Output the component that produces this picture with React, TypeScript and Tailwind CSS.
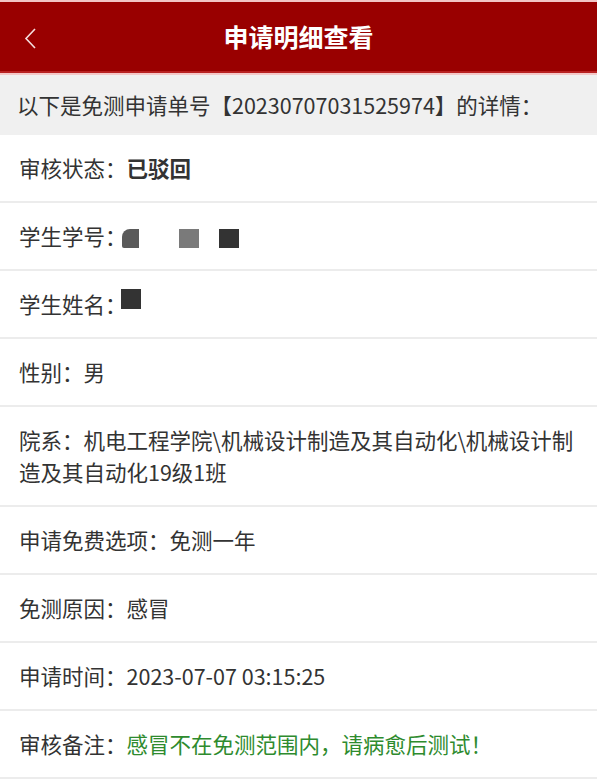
const font = { fontFamily: '"Noto Sans CJK SC", "Noto Sans", sans-serif' };

function Row({ label, children, tall }: { label: string; children?: React.ReactNode; tall?: boolean }) {
  return (
    <div
      className={
        "flex items-center border-b-2 border-[#ececec] bg-white px-[19px] text-[21.5px] leading-[32px] text-[#333] " +
        (tall ? "h-[100px]" : "h-[68px]")
      }
    >
      <div>
        <span>{label}</span>
        {children}
      </div>
    </div>
  );
}

export default function App() {
  return (
    <div className="w-[597px] h-[780px] overflow-hidden bg-white" style={font}>
      <div className="h-[2px] bg-[#f2c4c4]" />
      <header className="relative flex h-[69px] items-center justify-center bg-[#990000]">
        <svg className="absolute left-[24px] top-[25px]" width="14" height="24" viewBox="0 0 14 24">
          <path d="M11 2 L2 11.5 L11 21" fill="none" stroke="#f4dede" strokeWidth="1.6" />
        </svg>
        <h1 className="text-[25px] font-bold text-white">申请明细查看</h1>
      </header>
      <div className="h-[2px] bg-[#b82222]" />
      <div className="h-[2px] bg-[#f4c8c8]" />
      <div className="flex h-[60px] items-center bg-[#f0f0f0] px-[17px] text-[21.5px] text-[#333]">
        以下是免测申请单号【20230707031525974】的详情：
      </div>
      <Row label="审核状态：">
        <span className="font-bold">已驳回</span>
      </Row>
      <Row label="学生学号：">
        <span className="-ml-[5px] inline-flex translate-y-[3px] items-center align-baseline">
          <span className="h-[19px] w-[17px] rounded-tl-[8px] rounded-bl-[2px] bg-[#5a5a5a]" />
          <span className="ml-[40px] h-[19px] w-[20px] bg-[#7a7a7a]" />
          <span className="ml-[20px] h-[19px] w-[20px] bg-[#333]" />
        </span>
      </Row>
      <Row label="学生姓名：">
        <span className="-ml-[6px] inline-block h-[20px] w-[20px] -translate-y-[8px] bg-[#333] align-middle" />
      </Row>
      <Row label="性别：">男</Row>
      <Row label="院系：" tall>
        机电工程学院\机械设计制造及其自动化\机械设计制造及其自动化19级1班
      </Row>
      <Row label="申请免费选项：">免测一年</Row>
      <Row label="免测原因：">感冒</Row>
      <Row label="申请时间：">2023-07-07 03:15:25</Row>
      <Row label="审核备注：">
        <span className="text-[#2e8b2e]">感冒不在免测范围内，请病愈后测试！</span>
      </Row>
    </div>
  );
}
